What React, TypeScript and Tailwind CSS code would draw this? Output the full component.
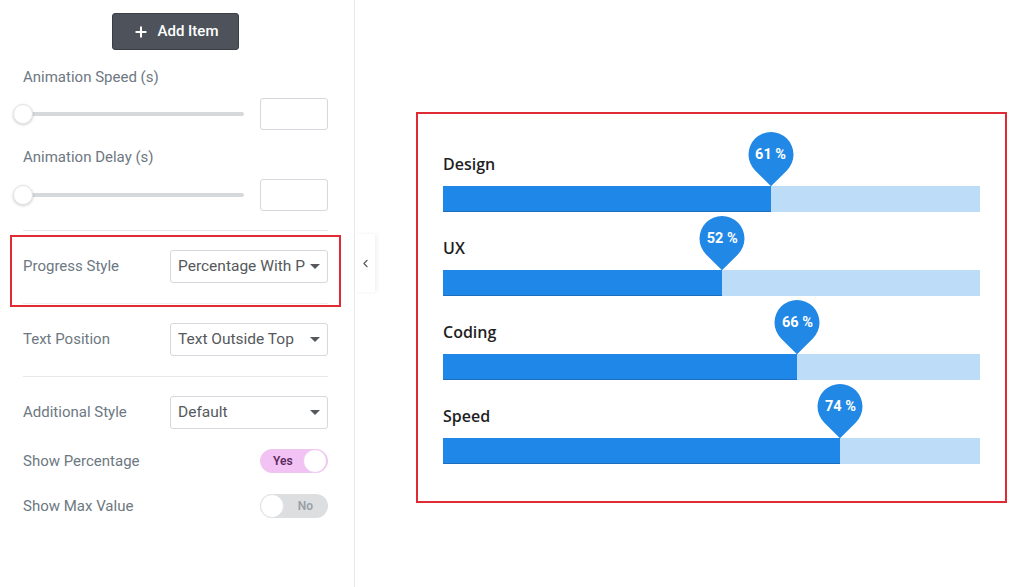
import { Plus, ChevronLeft } from "lucide-react";

const skills = [
  { name: "Design", value: 61 },
  { name: "UX", value: 52 },
  { name: "Coding", value: 66 },
  { name: "Speed", value: 74 },
];

function Slider() {
  return (
    <div className="flex h-[32px] items-center justify-between">
      <div className="relative h-[4px] w-[221px] rounded-full bg-[#d6d9dc]">
        <div className="absolute left-[-10px] top-1/2 h-[20px] w-[20px] -translate-y-1/2 rounded-full border border-[#e3e5e7] bg-white shadow-[0_1px_3px_rgba(0,0,0,0.2)]" />
      </div>
      <div className="h-[32px] w-[68px] rounded-[3px] border border-[#d5d8dc] bg-white" />
    </div>
  );
}

function Select({ value }: { value: string }) {
  return (
    <div className="flex h-[33px] w-[158px] items-center justify-between rounded-[3px] border border-[#d5d8dc] bg-white pl-[7px] pr-[7px]">
      <span className="overflow-hidden whitespace-nowrap text-[15.5px] text-[#55595c]">{value}</span>
      <span className="ml-1 h-0 w-0 shrink-0 border-x-[5px] border-t-[5px] border-x-transparent border-t-[#55595c]" />
    </div>
  );
}

function Row({ label, value }: { label: string; value: string }) {
  return (
    <div className="flex items-center justify-between">
      <span className="text-[15px] text-[#6d7882]">{label}</span>
      <Select value={value} />
    </div>
  );
}

function Toggle({ on }: { on: boolean }) {
  if (on) {
    return (
      <div className="flex h-[24px] w-[68px] items-center justify-between rounded-full border border-[#ecc6ee] bg-[#f3c2f4] pl-[12px]">
        <span className="text-[12px] font-semibold text-[#5b2a5e]">Yes</span>
        <span className="h-[24px] w-[24px] rounded-full border border-[#f0c8f2] bg-white" />
      </div>
    );
  }
  return (
    <div className="flex h-[24px] w-[68px] items-center justify-between rounded-full bg-[#dcdee0] pr-[15px]">
      <span className="h-[24px] w-[24px] rounded-full border border-[#e0e2e4] bg-white" />
      <span className="text-[12px] font-semibold text-[#9aa0a6]">No</span>
    </div>
  );
}

function Bar({ name, value }: { name: string; value: number }) {
  return (
    <div>
      <div className="h-[24px] font-['Open_Sans',sans-serif] text-[16px] font-semibold leading-[24px] text-[#1f1f1f]">
        {name}
      </div>
      <div className="relative mt-[10px] h-[26px] bg-[#bcdcf8]">
        <div className="h-full border-b border-[#1a6fc0] bg-[#1f87e8]" style={{ width: `${value}%` }} />
        <div
          className="absolute top-[-54px] h-[45px] w-[45px] -translate-x-1/2"
          style={{ left: `${value}%` }}
        >
          <div className="absolute inset-0 rotate-45 rounded-tl-full rounded-tr-full rounded-bl-full bg-[#2188e6]" />
          <div className="relative flex h-full items-center justify-center text-[14.5px] font-bold text-white">
            {value} %
          </div>
        </div>
      </div>
    </div>
  );
}

export default function App() {
  return (
    <div className="flex h-[587px] w-[1024px] overflow-hidden bg-white font-['Roboto',sans-serif]">
      {/* Controls panel */}
      <div className="relative w-[355px] shrink-0 border-r border-[#e6e8ea] bg-white pl-[23px] pr-[26px] pt-[13px]">
        <div className="flex justify-center">
          <button className="flex h-[37px] w-[127px] items-center justify-center gap-[9px] rounded-[3px] border border-[#3b3f45] bg-[#4e535b] text-[15px] font-medium text-white">
            <Plus size={16} strokeWidth={3} />
            Add Item
          </button>
        </div>

        <div className="mt-[17px] h-[20px] text-[15px] leading-[20px] text-[#6d7882]">Animation Speed (s)</div>
        <div className="mt-[11px]">
          <Slider />
        </div>

        <div className="mt-[17px] h-[20px] text-[15px] leading-[20px] text-[#6d7882]">Animation Delay (s)</div>
        <div className="mt-[12px]">
          <Slider />
        </div>

        <div className="mt-[19px] h-px bg-[#e6e8ea]" />

        <div className="-mx-[13px] mt-[4px] border-2 border-[#e02b35] px-[11px] pt-[13px]">
          <Row label="Progress Style" value="Percentage With P" />
          <div className="mt-[20px] h-px bg-[#eceef0]" />
          <div className="h-px" />
        </div>

        <div className="mt-[16px]">
          <Row label="Text Position" value="Text Outside Top" />
        </div>

        <div className="mt-[20px] h-px bg-[#e6e8ea]" />

        <div className="mt-[19px]">
          <Row label="Additional Style" value="Default" />
        </div>

        <div className="mt-[20px] flex items-center justify-between">
          <span className="text-[15px] text-[#6d7882]">Show Percentage</span>
          <Toggle on />
        </div>

        <div className="mt-[21px] flex items-center justify-between">
          <span className="text-[15px] text-[#6d7882]">Show Max Value</span>
          <Toggle on={false} />
        </div>

        {/* collapse tab */}
        <div className="absolute left-[355px] top-[234px] flex h-[58px] w-[20px] items-center justify-center bg-white shadow-[2px_0_4px_rgba(0,0,0,0.06)]">
          <ChevronLeft size={13} strokeWidth={2} className="text-[#55595c]" />
        </div>
      </div>

      {/* Preview */}
      <div className="flex-1 pl-[61px] pt-[112px]">
        <div className="w-[591px] border-2 border-[#e02b35] px-[25px] pb-[37px] pt-[38px]">
          <div className="flex flex-col gap-[24px]">
            {skills.map((s) => (
              <Bar key={s.name} name={s.name} value={s.value} />
            ))}
          </div>
        </div>
      </div>
    </div>
  );
}
